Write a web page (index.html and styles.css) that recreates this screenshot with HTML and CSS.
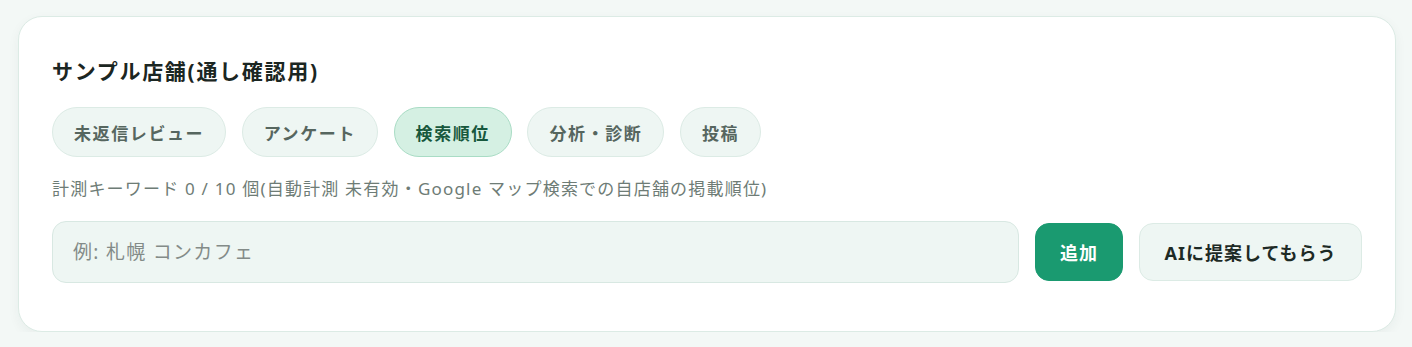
FILE: index.html
```html
<!DOCTYPE html>
<html lang="ja">
<head>
<meta charset="utf-8">
<link rel="stylesheet" href="styles.css">
</head>
<body>
<section class="card">
  <h2 class="title">サンプル店舗(通し確認用)</h2>
  <nav class="tabs">
    <button class="tab">未返信レビュー</button>
    <button class="tab">アンケート</button>
    <button class="tab active">検索順位</button>
    <button class="tab">分析・診断</button>
    <button class="tab">投稿</button>
  </nav>
  <p class="desc">計測キーワード 0 / 10 個(自動計測 未有効・Google マップ検索での自店舗の掲載順位)</p>
  <div class="row">
    <input class="input" type="text" placeholder="例: 札幌 コンカフェ">
    <button class="btn primary">追加</button>
    <button class="btn secondary">AIに提案してもらう</button>
  </div>
</section>
</body>
</html>
```
FILE: styles.css
```css
* { box-sizing: border-box; }
html, body { margin: 0; padding: 0; }
body {
  background: #f3f8f6;
  font-family: "Noto Sans", "Noto Sans CJK JP", sans-serif;
  padding: 16px 16px 0 18px;
}
.card {
  background: #fff;
  border: 1px solid #dcebe5;
  border-radius: 24px;
  box-shadow: 0 4px 12px rgba(30, 60, 50, 0.05);
  padding: 41px 33px 48px 33px;
  height: 316px;
}
.title {
  margin: 0;
  font-size: 21px;
  line-height: 26px;
  font-weight: 700;
  letter-spacing: 1.7px;
  color: #1b2622;
}
.tabs {
  display: flex;
  gap: 15.5px;
  margin-top: 23px;
}
.tab {
  font-family: inherit;
  height: 50px;
  padding: 0 21px;
  border-radius: 25px;
  border: 1px solid #dcebe5;
  background: #eef6f3;
  color: #56665f;
  font-size: 17px;
  font-weight: 700;
  letter-spacing: 1.6px;
}
.tab.active {
  background: #d5f0e3;
  border-color: #a9dcc5;
  color: #17583d;
}
.desc {
  margin: 21px 0 0;
  font-size: 17px;
  line-height: 22px;
  color: #6e7c76;
  letter-spacing: 1.2px;
}
.row {
  display: flex;
  align-items: center;
  gap: 16px;
  margin-top: 21px;
}
.input {
  flex: 1;
  height: 62px;
  border-radius: 14px;
  border: 1px solid #d8e8e2;
  background: #eef6f3;
  padding: 0 20px;
  font-family: inherit;
  font-size: 19px;
  letter-spacing: 1.3px;
  outline: none;
}
.input::placeholder { color: #838b88; }
.btn {
  font-family: inherit;
  height: 58px;
  border-radius: 14px;
  font-size: 18px;
  font-weight: 700;
  letter-spacing: 1px;
}
.primary {
  background: #1a9a70;
  color: #fff;
  border: 1px solid #1a9a70;
  padding: 0 24px;
}
.secondary {
  background: #eef6f3;
  color: #1d2a25;
  border: 1px solid #dcebe5;
  padding: 0 24.5px;
}
```
